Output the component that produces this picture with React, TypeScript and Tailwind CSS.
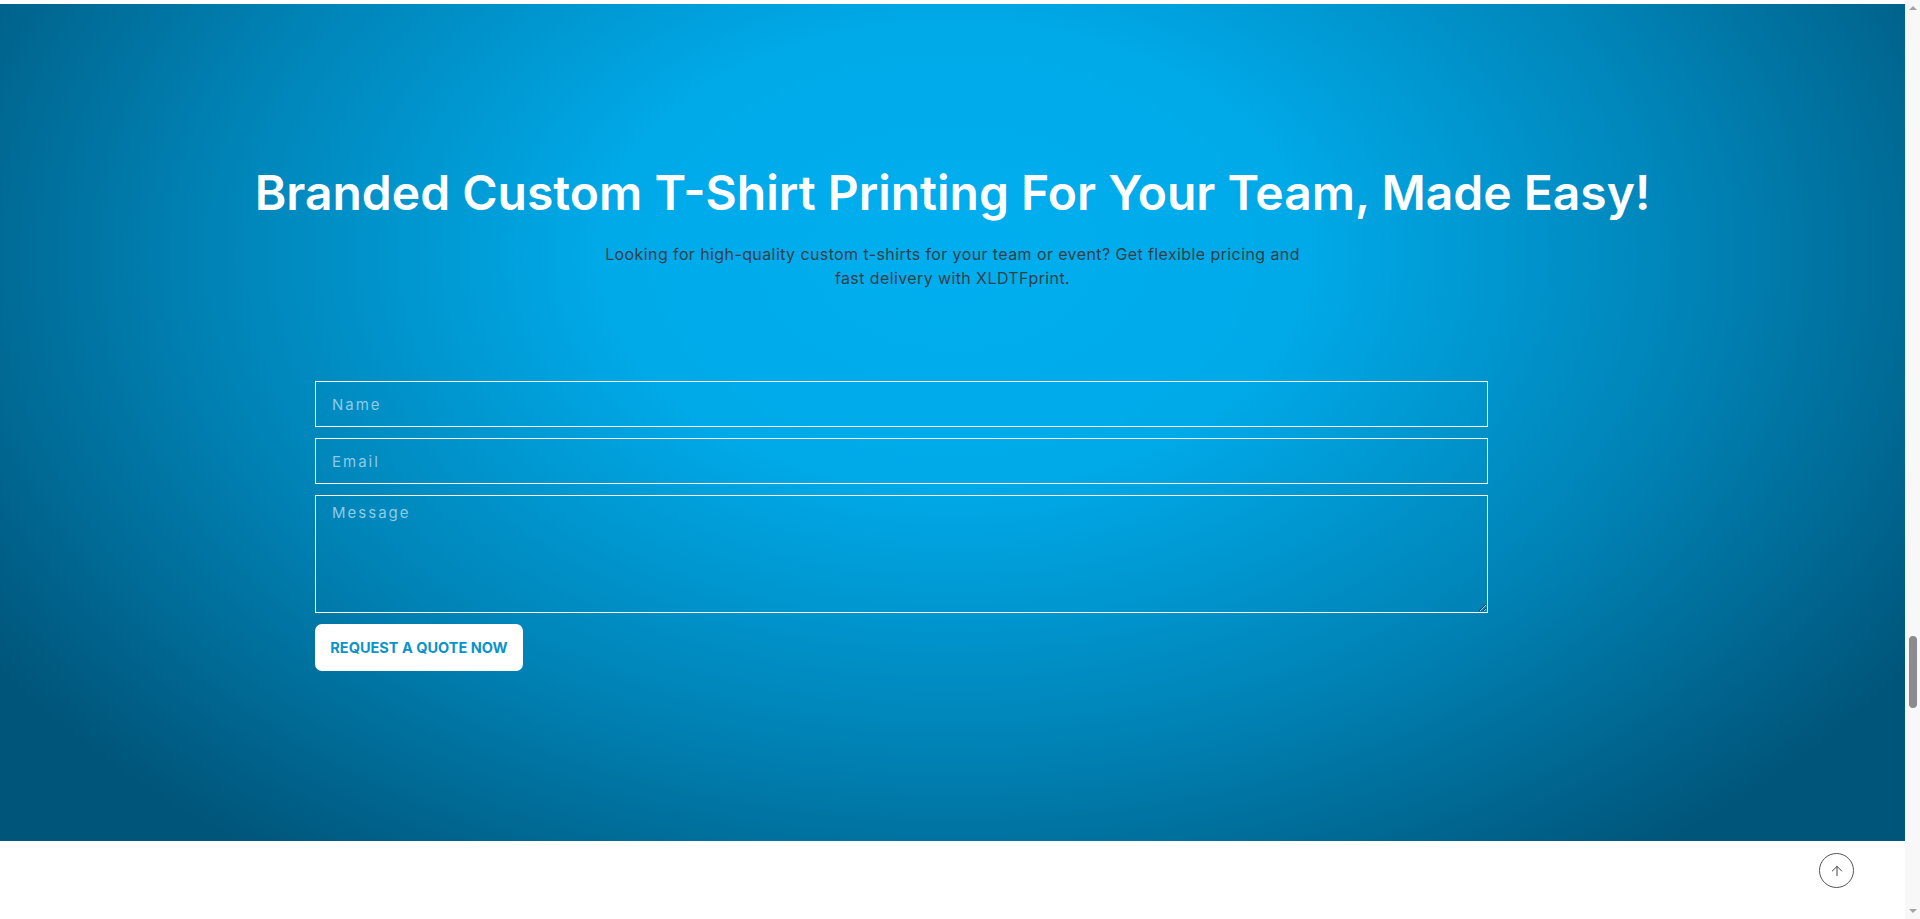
import { ArrowUp } from "lucide-react";

const font = { fontFamily: '"Inter", "Open Sans", sans-serif' };

function QuoteForm() {
  return (
    <form className="flex w-[1173px] flex-col" onSubmit={(e) => e.preventDefault()}>
      <input
        type="text"
        placeholder="Name"
        className="h-[46px] w-full border border-white bg-transparent px-4 text-[15px] tracking-[2px] text-white outline-none placeholder:text-[#8fcbe6]"
      />
      <input
        type="email"
        placeholder="Email"
        className="mt-[11px] h-[46px] w-full border border-white bg-transparent px-4 text-[15px] tracking-[2px] text-white outline-none placeholder:text-[#8fcbe6]"
      />
      <textarea
        placeholder="Message"
        className="mt-[11px] h-[118px] w-full border border-white bg-transparent px-4 py-[6px] text-[15px] tracking-[2px] text-white outline-none placeholder:text-[#8fcbe6]"
      />
      <button
        type="submit"
        className="mt-[11px] h-[47px] w-[208px] rounded-[7px] bg-white text-[14.5px] font-bold text-[#0a93c8]"
      >
        REQUEST A QUOTE NOW
      </button>
    </form>
  );
}

export default function App() {
  return (
    <div className="flex h-[919px] w-full overflow-hidden bg-white" style={font}>
      <div className="relative flex flex-1 flex-col">
        <div className="h-[4px] bg-white" />
        <section className="flex h-[837px] flex-col items-center bg-[radial-gradient(ellipse_60%_90%_at_50%_30%,#00aeef_0%,#00aae9_30%,#0083b6_65%,#00557a_100%)]">
          <h1 className="mt-[160px] text-[48px] font-semibold leading-[58px] text-white">
            Branded Custom T-Shirt Printing For Your Team, Made Easy!
          </h1>
          <p className="mt-[20px] w-[705px] text-center text-[16px] leading-[24px] tracking-[0.4px] text-[#333f48]">
            Looking for high-quality custom t-shirts for your team or event? Get flexible pricing and
            fast delivery with XLDTFprint.
          </p>
          <div className="mt-[91px] flex w-full pl-[315px]">
            <QuoteForm />
          </div>
        </section>
        <div className="flex-1 bg-white" />
        <button className="absolute left-[1819px] top-[853px] flex h-[35px] w-[35px] items-center justify-center rounded-full border border-[#555] bg-white text-[#444]">
          <ArrowUp size={16} strokeWidth={1.5} />
        </button>
      </div>
      <div className="flex w-[15px] flex-col items-center bg-[#f8f8f8]">
        <div className="mt-[6px] h-0 w-0 border-x-[4px] border-b-[4px] border-x-transparent border-b-[#a3a3a3]" />
        <div className="mt-[626px] h-[72px] w-[8px] rounded-full bg-[#8c8c8c]" />
        <div className="mt-auto mb-[6px] h-0 w-0 border-x-[4px] border-t-[4px] border-x-transparent border-t-[#a3a3a3]" />
      </div>
    </div>
  );
}
